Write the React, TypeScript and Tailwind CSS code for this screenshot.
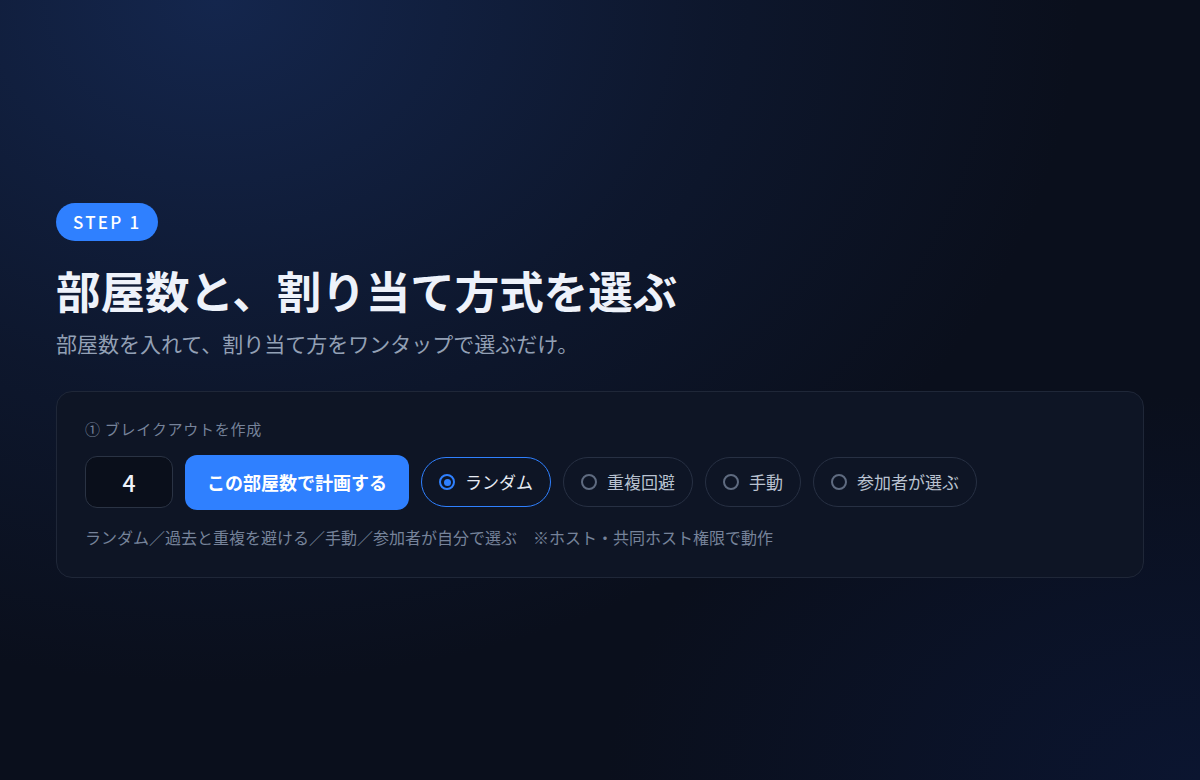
// App.tsx
// Breakout room setup — step 1 panel on a dark navy backdrop

import { useState } from 'react';

type Mode = 'random' | 'avoid' | 'manual' | 'self';

const MODES: { id: Mode; label: string }[] = [
  { id: 'random', label: 'ランダム' },
  { id: 'avoid', label: '重複回避' },
  { id: 'manual', label: '手動' },
  { id: 'self', label: '参加者が選ぶ' },
];

const FONT = 'font-["Noto_Sans_CJK_JP","Noto_Sans",sans-serif]';

function ModeChip({ label, active, onClick }: { label: string; active: boolean; onClick: () => void }) {
  return (
    <button
      onClick={onClick}
      className={`flex h-[50px] items-center gap-[10px] rounded-full border px-[17px] text-[17px] ${
        active ? 'border-[#2f80ff] text-[#e6ebf3]' : 'border-[#273043] text-[#b9c2d0]'
      }`}
    >
      <span
        className={`flex h-4 w-4 items-center justify-center rounded-full border-2 ${
          active ? 'border-[#2f80ff]' : 'border-[#5f6b80]'
        }`}
      >
        {active && <span className="h-[7px] w-[7px] rounded-full bg-[#2f80ff]" />}
      </span>
      {label}
    </button>
  );
}

export default function App() {
  const [mode, setMode] = useState<Mode>('random');
  const [rooms, setRooms] = useState('4');

  return (
    <div
      className={`${FONT} flex h-[780px] w-full flex-col justify-center bg-[#0a0f1c] bg-[radial-gradient(ellipse_at_18%_0%,#14264d_0%,rgba(20,38,77,0.35)_35%,transparent_62%),radial-gradient(ellipse_at_100%_100%,#0b1530_0%,transparent_35%)] px-14`}
    >
      {/* Step badge */}
      <div className="flex">
        <span className="flex h-[38px] items-center rounded-full bg-[#2f80ff] px-[17px] text-[17px] font-medium leading-none tracking-[0.13em] text-white">
          STEP 1
        </span>
      </div>

      {/* Heading */}
      <h1 className="mt-[22px] text-[44.5px] font-bold leading-[53px] text-[#eef2fa]">
        部屋数と、割り当て方式を選ぶ
      </h1>
      <p className="mt-3 text-[21px] leading-[30px] text-[#93a0b5]">
        部屋数を入れて、割り当て方をワンタップで選ぶだけ。
      </p>

      {/* Panel */}
      <div className="mt-[33px] rounded-2xl border border-[#1f2738] bg-[#0e1525] px-7 pb-7 pt-[27px]">
        <div className="text-[15px] leading-5 tracking-[0.05em] text-[#76839a]">① ブレイクアウトを作成</div>

        <div className="mt-4 flex items-center gap-3">
          <input
            value={rooms}
            onChange={(e) => setRooms(e.target.value)}
            className="h-[52px] w-[88px] rounded-xl border border-[#2a3344] bg-[#0a0f1b] text-center text-[23px] font-medium text-[#eef2fa] outline-none"
          />
          <button className="h-[55px] rounded-xl bg-[#2f80ff] px-[22px] text-[18px] font-bold text-white">
            この部屋数で計画する
          </button>
          {MODES.map((m) => (
            <ModeChip key={m.id} label={m.label} active={mode === m.id} onClick={() => setMode(m.id)} />
          ))}
        </div>

        <p className="mt-[15px] text-[16px] leading-6 text-[#76839a]">
          ランダム／過去と重複を避ける／手動／参加者が自分で選ぶ　※ホスト・共同ホスト権限で動作
        </p>
      </div>
    </div>
  );
}
